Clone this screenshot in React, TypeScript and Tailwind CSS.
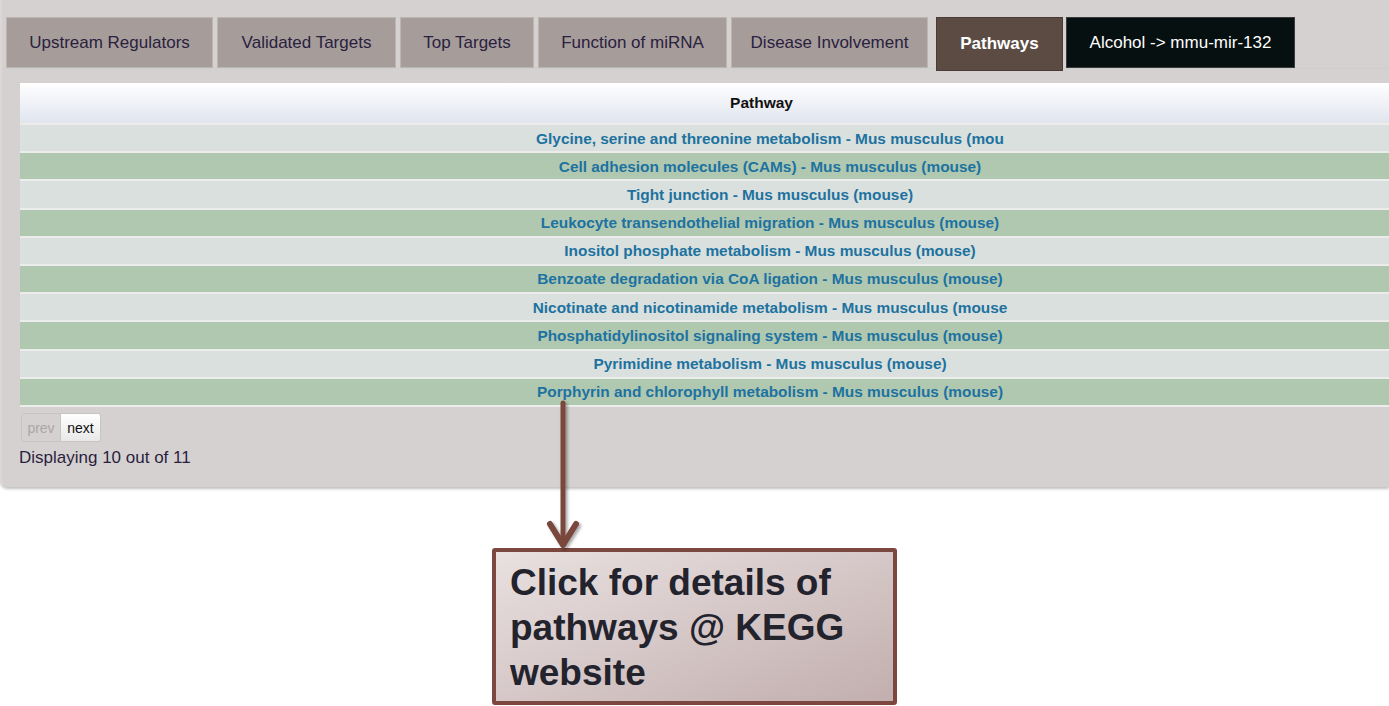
import React from "react";

const tabs: [string, string][] = [
  ["Upstream Regulators", "w-[207px]"],
  ["Validated Targets", "w-[179px]"],
  ["Top Targets", "w-[134px]"],
  ["Function of miRNA", "w-[189px]"],
  ["Disease Involvement", "w-[197px]"],
];

const rows = [
  "Glycine, serine and threonine metabolism - Mus musculus (mou",
  "Cell adhesion molecules (CAMs) - Mus musculus (mouse)",
  "Tight junction - Mus musculus (mouse)",
  "Leukocyte transendothelial migration - Mus musculus (mouse)",
  "Inositol phosphate metabolism - Mus musculus (mouse)",
  "Benzoate degradation via CoA ligation - Mus musculus (mouse)",
  "Nicotinate and nicotinamide metabolism - Mus musculus (mouse",
  "Phosphatidylinositol signaling system - Mus musculus (mouse)",
  "Pyrimidine metabolism - Mus musculus (mouse)",
  "Porphyrin and chlorophyll metabolism - Mus musculus (mouse)",
];

export default function App() {
  return (
    <div
      className="relative w-[1389px] h-[706px] bg-white overflow-hidden"
      style={{ fontFamily: '"Liberation Sans", Arial, sans-serif' }}
    >
      {/* main panel */}
      <div className="h-[487px] bg-[#d6d1d1] rounded-bl-[8px] overflow-hidden shadow-[0_2px_3px_rgba(0,0,0,0.25)] border-l-[2px] border-[#dcd6d6]">
        {/* tabs */}
        <div className="pt-[17px] pl-[4px] border-b border-[#cdcfca] flex items-start h-[69px]">
          <div className="flex gap-[4px] items-start">
            {tabs.map(([t, w]) => (
              <div
                key={t}
                className={
                  "h-[51px] pt-[1px] flex items-center justify-center bg-[#a69d9a] border border-[#bdb5b2] text-[17px] text-[#2a2140] whitespace-nowrap " +
                  w
                }
              >
                {t}
              </div>
            ))}
          </div>
          <div className="ml-[8px] h-[54px] w-[127px] flex items-center justify-center bg-[#5b4b43] border border-[#4a3c35] text-[17px] font-bold text-white whitespace-nowrap">
            Pathways
          </div>
          <div className="ml-[3px] h-[51px] w-[229px] pt-[1px] flex items-center justify-center bg-[#061010] border border-[#3a3a3a] text-[17px] text-white whitespace-nowrap">
            {"Alcohol -> mmu-mir-132"}
          </div>
        </div>

        {/* table */}
        <div className="ml-[18px] mt-[14px] w-[1500px]">
          <div className="h-[40px] flex items-center justify-center pr-[17px] bg-gradient-to-b from-[#ffffff] to-[#e1e5ef] border-b border-[#e6e6e6] text-[15.5px] font-bold text-[#111111]">
            Pathway
          </div>
          {rows.map((r, i) => (
            <div
              key={r}
              className={
                "h-[28.2px] flex items-center justify-center border-t-[2px] border-[#ececec] text-[15.4px] font-bold text-[#1d72a0] whitespace-nowrap " +
                (i % 2 === 0 ? "bg-[#dae0dd]" : "bg-[#b0c8b0]")
              }
            >
              {r}
            </div>
          ))}
          <div className="h-[2px] bg-[#ececec]" />
        </div>

        {/* pagination */}
        <div className="ml-[19px] mt-[6px] flex">
          <div className="h-[29px] w-[40px] pt-[2px] flex items-center justify-center border border-[#c9c4c4] bg-[#d6d1d1] rounded-l-[3px] text-[14px] text-[#a9a6a6]">
            prev
          </div>
          <div className="h-[29px] w-[40px] pt-[2px] flex items-center justify-center border border-l-0 border-[#c9c4c4] bg-gradient-to-b from-[#ffffff] to-[#e8e8e8] rounded-r-[3px] text-[14px] text-[#111111]">
            next
          </div>
        </div>
        <div className="ml-[17px] mt-[2px] text-[17px] text-[#2a1f3f] leading-[28px]">
          Displaying 10 out of 11
        </div>
      </div>

      {/* callout box */}
      <div className="ml-[492px] mt-[61px] w-[405px] h-[157px] border-[4px] border-[#7b473e] rounded-[3px] bg-gradient-to-br from-[#e9e0e0] via-[#d6c8c8] to-[#c2aeae] pl-[14px] pt-[8px]">
        <div className="text-[37px] leading-[45px] font-bold text-[#23232d]">
          Click for details of
          <br />
          pathways @ KEGG
          <br />
          website
        </div>
      </div>

      {/* arrow */}
      <svg
        className="absolute left-[540px] top-[400px]"
        width="50"
        height="155"
        viewBox="0 0 50 155"
      >
        <defs>
          <filter id="sh" x="-50%" y="-10%" width="200%" height="130%">
            <feDropShadow dx="2" dy="2" stdDeviation="1.5" floodColor="#000" floodOpacity="0.35" />
          </filter>
        </defs>
        <g filter="url(#sh)" stroke="#7a463d" fill="none" strokeLinecap="round" strokeLinejoin="round">
          <line x1="23" y1="3" x2="23" y2="144" strokeWidth="5" />
          <polyline points="10,124 23,145 36,124" strokeWidth="6" />
        </g>
      </svg>
    </div>
  );
}
